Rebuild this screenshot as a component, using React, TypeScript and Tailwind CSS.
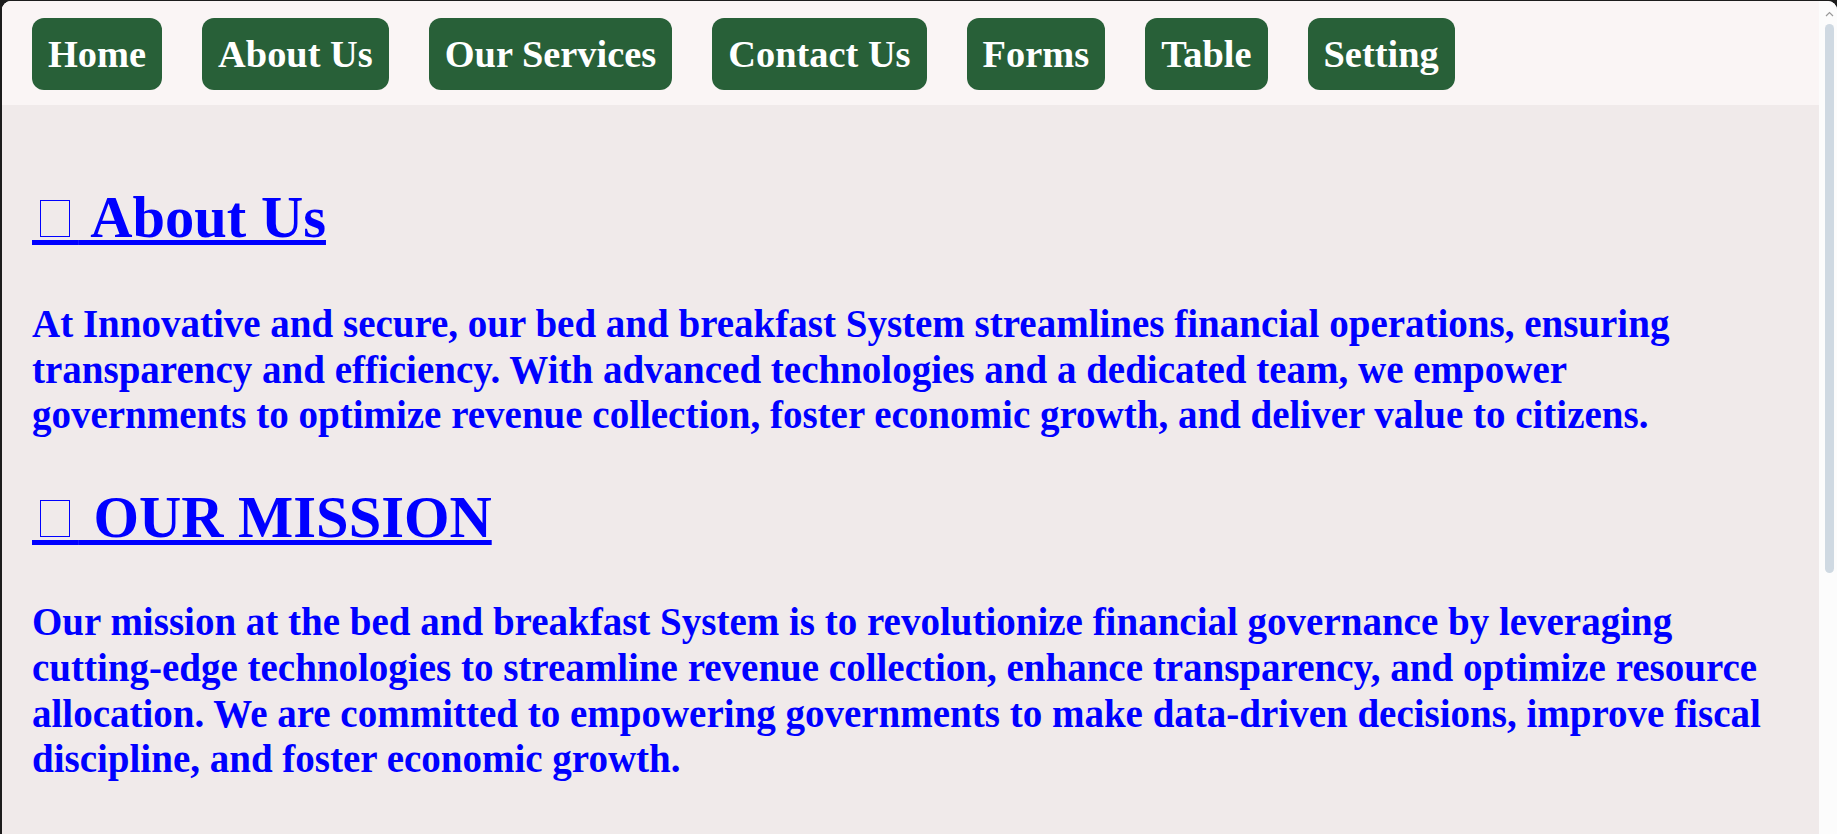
const navItems = ["Home", "About Us", "Our Services", "Contact Us", "Forms", "Table", "Setting"];

// missing-glyph box that the browser drew in front of the headings
function Tofu() {
  return (
    <span className="relative tracking-[1px]">
      {"\u00a0\u00a0\u00a0"}
      <span className="absolute left-[8px] top-[15px] h-[37px] w-[30px] border border-[#0000ff]" />
    </span>
  );
}

export default function App() {
  return (
    <div className="h-screen overflow-hidden bg-[#1c1c1c] pl-[2px] pt-[1px] font-['Liberation_Serif',serif]">
      <div className="flex h-full overflow-hidden rounded-t-[9px] bg-[#fcfcfc]">
        <div className="flex flex-1 flex-col bg-[#f0eaea]">
          {/* Navigation */}
          <nav className="flex h-[104px] gap-[40px] bg-[#faf5f5] pl-[30px] pt-[17px]">
            {navItems.map((item) => (
              <a
                key={item}
                href="#"
                className="h-fit rounded-[12px] bg-[#286038] px-[16px] py-[14px] text-[38.4px] font-bold leading-[44px] text-white"
              >
                {item}
              </a>
            ))}
          </nav>

          {/* Content */}
          <main className="px-[30px] pt-[79px] font-bold text-[#0000ff]">
            <h1 className="mb-[50px] text-[58.5px] leading-[67px] underline">
              <Tofu /> About Us
            </h1>
            <p className="mb-[46px] text-[39px] leading-[45.7px]">
              At Innovative and secure, our bed and breakfast System streamlines financial operations, ensuring
              transparency and efficiency. With advanced technologies and a dedicated team, we empower governments to
              optimize revenue collection, foster economic growth, and deliver value to citizens.
            </p>

            <h1 className="mb-[48px] text-[58.5px] leading-[67px] underline">
              <Tofu /> OUR MISSION
            </h1>
            <p className="text-[39px] leading-[45.7px]">
              Our mission at the bed and breakfast System is to revolutionize financial governance by leveraging
              cutting-edge technologies to streamline revenue collection, enhance transparency, and optimize resource
              allocation. We are committed to empowering governments to make data-driven decisions, improve fiscal
              discipline, and foster economic growth.
            </p>
          </main>
        </div>

        {/* Scrollbar */}
        <div className="flex w-[18px] flex-col bg-[#fcfcfc]">
          <svg className="ml-[6px] mt-[10px]" width="9" height="6" viewBox="0 0 9 6">
            <path d="M1 5 L4.5 1.5 L8 5" fill="none" stroke="#9a9a9a" strokeWidth="1.2" />
          </svg>
          <div className="ml-[6px] mt-[7px] h-[549px] w-[9px] rounded-full bg-[#cfd9e2]" />
        </div>
      </div>
    </div>
  );
}
